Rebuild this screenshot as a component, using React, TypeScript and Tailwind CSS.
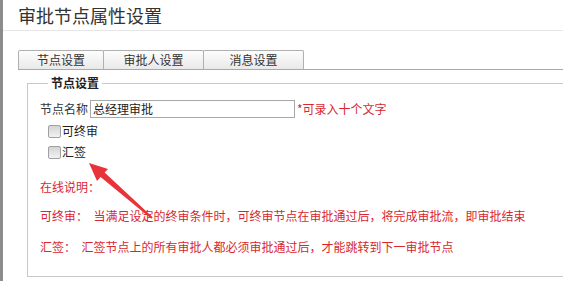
import React from "react";

const tabs = ["节点设置", "审批人设置", "消息设置"];

function CheckRow({ label }: { label: string }) {
  return (
    <div className="flex items-center h-[20px] pl-[8px]">
      <span className="w-[13px] h-[13px] rounded-[2px] border border-[#a0a0a0] bg-gradient-to-b from-[#d4d4d4] to-[#f2f2f2]" />
      <span className="ml-[1px] text-[12px] text-[#222]">{label}</span>
    </div>
  );
}

function App() {
  return (
    <div
      className="relative w-[563px] h-[281px] overflow-hidden bg-white border-l-[3px] border-[#8c8c8c]"
      style={{ fontFamily: '"Noto Sans CJK SC", "Noto Sans", sans-serif' }}
    >
      <div className="h-[31px] border-b border-[#e6e6e6] pl-[15px] text-[18px] leading-[31px] text-[#333]">
        审批节点属性设置
      </div>

      <div className="mt-[19px] ml-[15px] flex border-b border-[#a9a9a9]">
        {tabs.map((t, i) => (
          <div
            key={t}
            className={
              "h-[19px] flex items-center justify-center text-[12px] text-[#333] border border-b-0 border-[#b0b0b0] rounded-t-[2px] bg-gradient-to-b from-[#fdfdfd] to-[#e9e9e9] " +
              (i === 0 ? "w-[86px]" : i === 1 ? "w-[101px] -ml-px" : "w-[101px] -ml-px")
            }
          >
            {t}
          </div>
        ))}
      </div>

      <fieldset className="mt-[6px] ml-[24px] w-[560px] border border-[#c8c8c8] pl-[12px] pb-[19px]">
        <legend className="ml-[8px] px-[3px] text-[12px] leading-[14px] font-bold text-[#222]">
          节点设置
        </legend>

        <div className="mt-[10px] flex items-center h-[18px]">
          <span className="text-[12px] text-[#333] w-[50px]">节点名称</span>
          <div className="w-[205px] h-[18px] border border-[#a8a8a8] px-[2px] text-[12px] leading-[16px] text-[#222]">
            总经理审批
          </div>
          <span className="ml-[2px] text-[12px] text-[#d8282f]">*可录入十个文字</span>
        </div>

        <div className="mt-[3px]">
          <CheckRow label="可终审" />
        </div>
        <div className="mt-[1px]">
          <CheckRow label="汇签" />
        </div>

        <div className="text-[12px] leading-[20px] text-[#d8282f]">
          <div className="mt-[15px]">在线说明：</div>
          <div className="mt-[9px] whitespace-pre">
            可终审：  当满足设定的终审条件时，可终审节点在审批通过后，将完成审批流，即审批结束
          </div>
          <div className="mt-[11px] whitespace-pre">
            汇签：  汇签节点上的所有审批人都必须审批通过后，才能跳转到下一审批节点
          </div>
        </div>
      </fieldset>

      <svg className="absolute left-[-3px] top-0 pointer-events-none" width="563" height="281">
        <polygon
          points="89,163 108,169 104.6,172.5 152.7,217.2 151.3,218.8 100.6,177.1 97,181"
          fill="#e8333a"
        />
      </svg>
    </div>
  );
}

export default App;
